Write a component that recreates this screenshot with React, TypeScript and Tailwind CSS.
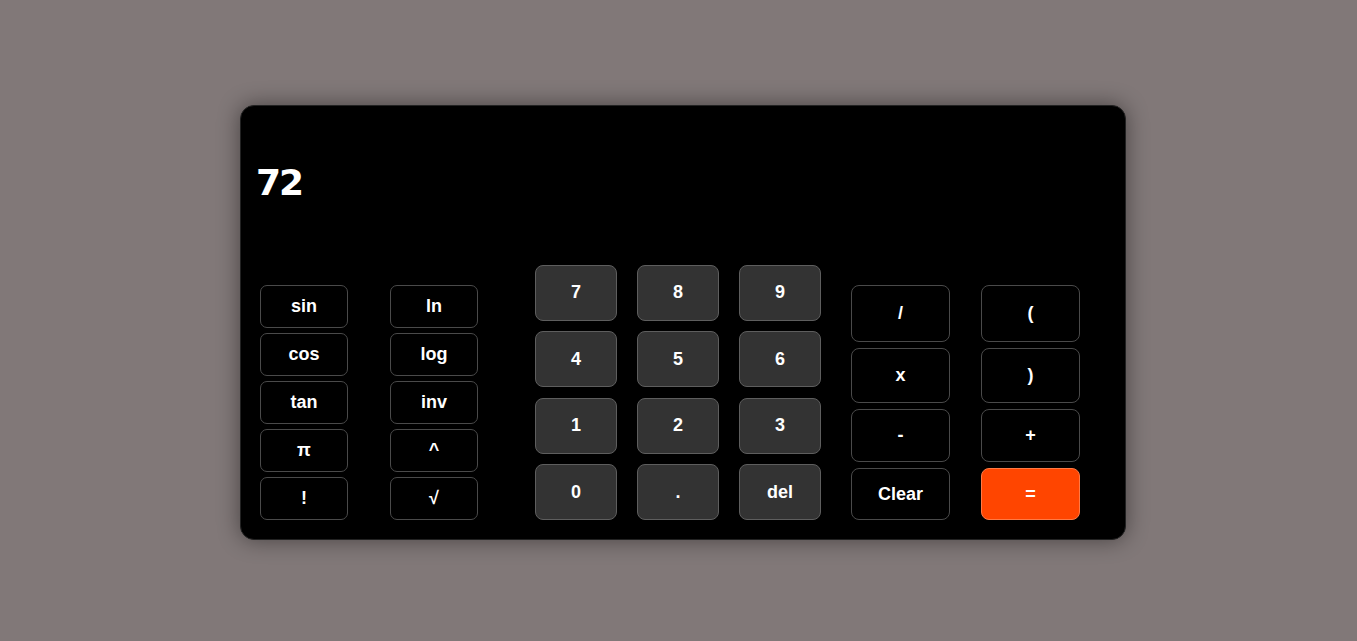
const funcCol1 = ['sin', 'cos', 'tan', 'π', '!']
const funcCol2 = ['ln', 'log', 'inv', '^', '√']
const digits = ['7', '8', '9', '4', '5', '6', '1', '2', '3', '0', '.', 'del']
const opRows = [
  { h: 'h-[57px]', a: '/', b: '(' },
  { h: 'h-[55px]', a: 'x', b: ')' },
  { h: 'h-[53px]', a: '-', b: '+' },
  { h: 'h-[52px]', a: 'Clear', b: '=' },
]

function FuncColumn({ keys, className = '' }: { keys: string[]; className?: string }) {
  return (
    <div className={`flex flex-col gap-[5px] ${className}`}>
      {keys.map((k) => (
        <button
          key={k}
          className="h-[43px] w-[88px] rounded-[7px] border border-[#4a4a4a] bg-black text-[18px] font-bold text-white"
        >
          {k}
        </button>
      ))}
    </div>
  )
}

export default function App() {
  return (
    <div
      className="flex h-[641px] w-full items-start bg-[#817878] pl-[240px] pt-[105px]"
      style={{ fontFamily: '"Liberation Sans", Arial, sans-serif' }}
    >
      <div className="flex h-[435px] w-[886px] flex-col rounded-[14px] border border-[#222] bg-black px-[19px] pb-[19px] shadow-[0_0_22px_rgba(0,0,0,0.45)]">
        <div className="h-[140px] pt-[59px]">
          <div
            className="-ml-[4px] text-[36px] leading-none font-bold tracking-[-2px] text-white"
            style={{ fontFamily: '"DejaVu Sans", sans-serif' }}
          >
            72
          </div>
        </div>
        <div className="flex flex-1 items-end">
          <FuncColumn keys={funcCol1} />
          <FuncColumn keys={funcCol2} className="ml-[42px]" />
          <div className="ml-[57px] grid grid-cols-3 gap-x-[20px] gap-y-[10.4px]">
            {digits.map((d) => (
              <button
                key={d}
                className="h-[56px] w-[82px] rounded-[8px] border border-[#5e5e5e] bg-[#333333] text-[18px] font-bold text-white"
              >
                {d}
              </button>
            ))}
          </div>
          <div className="ml-[30px] flex flex-col gap-[6px]">
            {opRows.map((r) => (
              <div key={r.a} className="flex gap-[31px]">
                <button
                  className={`${r.h} w-[99px] rounded-[8px] border border-[#4a4a4a] bg-black text-[18px] font-bold text-white`}
                >
                  {r.a}
                </button>
                <button
                  className={`${r.h} w-[99px] rounded-[8px] border text-[18px] font-bold text-white ${
                    r.b === '=' ? 'border-[#ff7a45] bg-[#ff4500]' : 'border-[#4a4a4a] bg-black'
                  }`}
                >
                  {r.b}
                </button>
              </div>
            ))}
          </div>
        </div>
      </div>
    </div>
  )
}
